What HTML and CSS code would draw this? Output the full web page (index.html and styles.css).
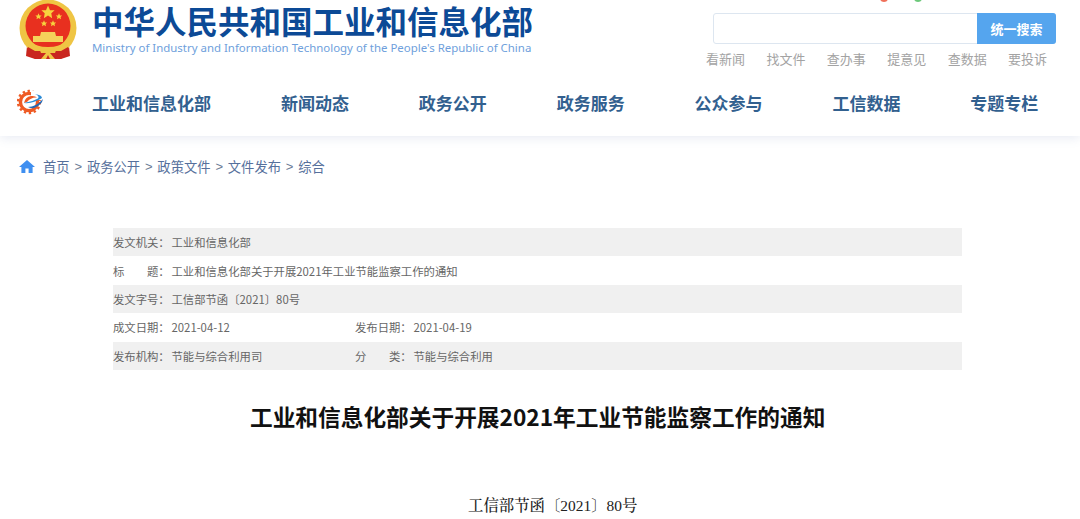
FILE: index.html
```html
<!DOCTYPE html>
<html lang="zh-CN">
  <head>
    <meta charset="utf-8" />
    <title>工业和信息化部关于开展2021年工业节能监察工作的通知</title>
    <link rel="stylesheet" href="styles.css">
  </head>
  <body>
    <div class="header">
      <div class="top">
        <svg class="emblem" width="58" height="60" viewBox="0 0 58 60">
          <defs>
            <polygon id="star" points="0,-10 2.9,-3.1 9.5,-3.1 4.7,1.2 5.9,8.1 0,4.4 -5.9,8.1 -4.7,1.2 -9.5,-3.1 -2.9,-3.1" fill="#f7d23e" />
          </defs>
          <path d="M8 46 L7 56 L16 59 H42 L51 56 L50 46 Z" fill="#c9261f" />
          <circle cx="29" cy="28" r="28.5" fill="#efc544" />
          <circle cx="29" cy="26" r="22.5" fill="#e8301f" />
          <use href="#star" transform="translate(29 12.5) scale(.7)" />
          <use href="#star" transform="translate(19.5 16.5) scale(.33)" />
          <use href="#star" transform="translate(40 16.5) scale(.33)" />
          <use href="#star" transform="translate(25 23.5) scale(.33)" />
          <use href="#star" transform="translate(34 23.5) scale(.33)" />
          <path d="M22 32 H36 L37 36 H44 V42 H14 V36 H21 Z" fill="#f5d25a" />
          <path d="M10 41 Q17 47 29 47 Q41 47 48 41 L50 45 Q42 52 29 52 Q16 52 8 45 Z" fill="#efc544" />
          <path d="M9 47 L16 51 H42 L49 47 L50 55 L41 59 H17 L8 55 Z" fill="#c9261f" />
          <path d="M20 48 Q29 51 38 48 L36 53 H31 L36 59 H31 L29 55 L27 59 H22 L27 53 H22 Z" fill="#efc544" />
        </svg>
        <div class="site-name">
          <div class="cn-name">中华人民共和国工业和信息化部</div>
          <div class="en-name">Ministry of Industry and Information Technology of the People's Republic of China</div>
        </div>
        <div class="top-right">
          <div class="lang-dots"><span class="dot red"></span><span class="dot green"></span></div>
          <div class="search">
            <div class="search-input"></div>
            <div class="search-btn">统一搜索</div>
          </div>
          <div class="quick-links">
            <a>看新闻</a><a>找文件</a><a>查办事</a><a>提意见</a><a>查数据</a><a>要投诉</a>
          </div>
        </div>
      </div>
      <div class="nav">
        <svg class="nav-logo" width="28" height="26" viewBox="0 0 28 26">
          <circle cx="12" cy="13" r="8.6" fill="none" stroke="#ee5a24" stroke-width="3.4" />
          <circle cx="12" cy="13" r="11" fill="none" stroke="#ee5a24" stroke-width="2.4" stroke-dasharray="2.4 2.6" />
          <path d="M14 2 H28 V11 H14 Z" fill="#fff" />
          <path d="M7 14 Q8 8 14 7 Q18 6.5 20 8.5 Q14 8 10 13 Z" fill="#ee5a24" />
          <path d="M7 14 Q16 15 25 9 Q25 6 18 5 Q23 7 21 9.5 Q15 13 7 14 Z" fill="#2b8bd6" />
          <path d="M11 18 Q19 18 26 10 Q25 16 17 19 Q13 19.5 11 18 Z" fill="#2468b4" />
        </svg>
        <a class="nav-item">工业和信息化部</a>
        <a class="nav-item">新闻动态</a>
        <a class="nav-item">政务公开</a>
        <a class="nav-item">政务服务</a>
        <a class="nav-item">公众参与</a>
        <a class="nav-item">工信数据</a>
        <a class="nav-item">专题专栏</a>
      </div>
    </div>

    <div class="crumbs">
      <svg class="home" width="16" height="13" viewBox="0 0 16 13">
        <path d="M8 0 L16 7 H13.6 V13 H9.6 V8.5 H6.4 V13 H2.4 V7 H0 Z" fill="#3f8ff0" />
      </svg>
      <span>首页</span><i>&gt;</i><span>政务公开</span><i>&gt;</i><span>政策文件</span><i>&gt;</i><span>文件发布</span><i>&gt;</i><span>综合</span>
    </div>

    <div class="info">
      <div class="info-row"><span class="lbl">发文机关：</span><span>工业和信息化部</span></div>
      <div class="info-row"><span class="lbl">标　　题：</span><span>工业和信息化部关于开展2021年工业节能监察工作的通知</span></div>
      <div class="info-row"><span class="lbl">发文字号：</span><span>工信部节函〔2021〕80号</span></div>
      <div class="info-row">
        <span class="lbl">成文日期：</span><span class="val">2021-04-12</span>
        <span class="lbl">发布日期：</span><span>2021-04-19</span>
      </div>
      <div class="info-row">
        <span class="lbl">发布机构：</span><span class="val">节能与综合利用司</span>
        <span class="lbl">分　　类：</span><span>节能与综合利用</span>
      </div>
    </div>

    <h1 class="title">工业和信息化部关于开展2021年工业节能监察工作的通知</h1>
    <p class="doc-no">工信部节函〔2021〕80号</p>
  </body>
</html>
```

FILE: styles.css
```css
html,
body {
  margin: 0;
  padding: 0;
  background-color: white;
}
body {
  height: 519px;
  overflow: hidden;
  font-family: "Noto Sans CJK SC", "Noto Sans", sans-serif;
}
.header {
  height: 136px;
  box-shadow: 0 2px 10px rgba(90, 110, 170, 0.14);
}
.top {
  display: flex;
  height: 81px;
  padding-left: 19px;
}
.emblem {
  flex: none;
}
.site-name {
  margin-left: 15px;
  padding-top: 4px;
  width: 621px;
}
.cn-name {
  font-family: "Liberation Sans", "Noto Sans CJK SC", sans-serif;
  font-size: 31.5px;
  line-height: 38px;
  font-weight: 700;
  color: #0c4a96;
  white-space: nowrap;
}
.en-name {
  margin-top: -2px;
  font-family: "Noto Sans", sans-serif;
  font-size: 11.45px;
  line-height: 16px;
  color: #6f9fdc;
  white-space: nowrap;
}
.top-right {
  width: 343px;
}
.lang-dots {
  display: flex;
  height: 13px;
  padding-left: 167px;
  gap: 26px;
  overflow: hidden;
}
.dot {
  width: 8px;
  height: 8px;
  margin-top: -6px;
  border-radius: 50%;
}
.red {
  background-color: #f0705a;
}
.green {
  background-color: #6cc87a;
}
.search {
  display: flex;
  height: 31px;
  box-sizing: border-box;
  border: 1px solid #dde6f0;
  border-radius: 3px;
}
.search-input {
  flex: 1;
}
.search-btn {
  width: 79px;
  margin: -1px -1px -1px 0;
  border-radius: 0 3px 3px 0;
  background-color: #55a5ee;
  color: white;
  font-size: 13px;
  font-weight: 700;
  line-height: 31px;
  text-align: center;
}
.quick-links {
  display: flex;
  gap: 21.4px;
  margin-top: 6px;
  margin-left: -7px;
  font-size: 13px;
  line-height: 18px;
  color: #a3a3a3;
  white-space: nowrap;
}
.nav {
  display: flex;
  align-items: center;
  height: 42px;
  padding-left: 17px;
}
.nav-logo {
  flex: none;
  margin-right: 47px;
}
.nav-item {
  margin-right: 69.9px;
  font-size: 17px;
  font-weight: 700;
  color: #32608f;
  white-space: nowrap;
}
.nav-item:last-child {
  margin-right: 0;
}
.crumbs {
  display: flex;
  align-items: center;
  height: 20px;
  margin: 20px 0 0 19px;
  font-size: 13.3px;
  color: #56709c;
  white-space: nowrap;
}
.home {
  margin-right: 8px;
}
.crumbs i {
  margin: 0 4.85px;
  font-style: normal;
  font-family: "Liberation Sans", sans-serif;
  font-size: 13px;
  color: #6b7b95;
}
.info {
  margin: 52px 118px 0 113px;
  font-size: 11.35px;
  color: #666;
}
.info-row {
  display: flex;
  align-items: center;
  height: 28.4px;
  white-space: nowrap;
}
.info-row:nth-child(odd) {
  background-color: #f0f0f0;
}
.lbl {
  width: 58.5px;
}
.val {
  width: 183.5px;
}
.title {
  margin: 32px 0 0 0;
  padding-left: 250px;
  font-size: 22.7px;
  line-height: 30px;
  font-weight: 700;
  color: #111;
  white-space: nowrap;
}
.doc-no {
  margin: 64px 0 0 0;
  padding-left: 468px;
  font-family: "Liberation Serif", "Noto Serif CJK SC", "Noto Sans CJK SC", serif;
  font-size: 15.4px;
  font-weight: 500;
  line-height: 20px;
  color: #222;
  white-space: nowrap;
}
```
